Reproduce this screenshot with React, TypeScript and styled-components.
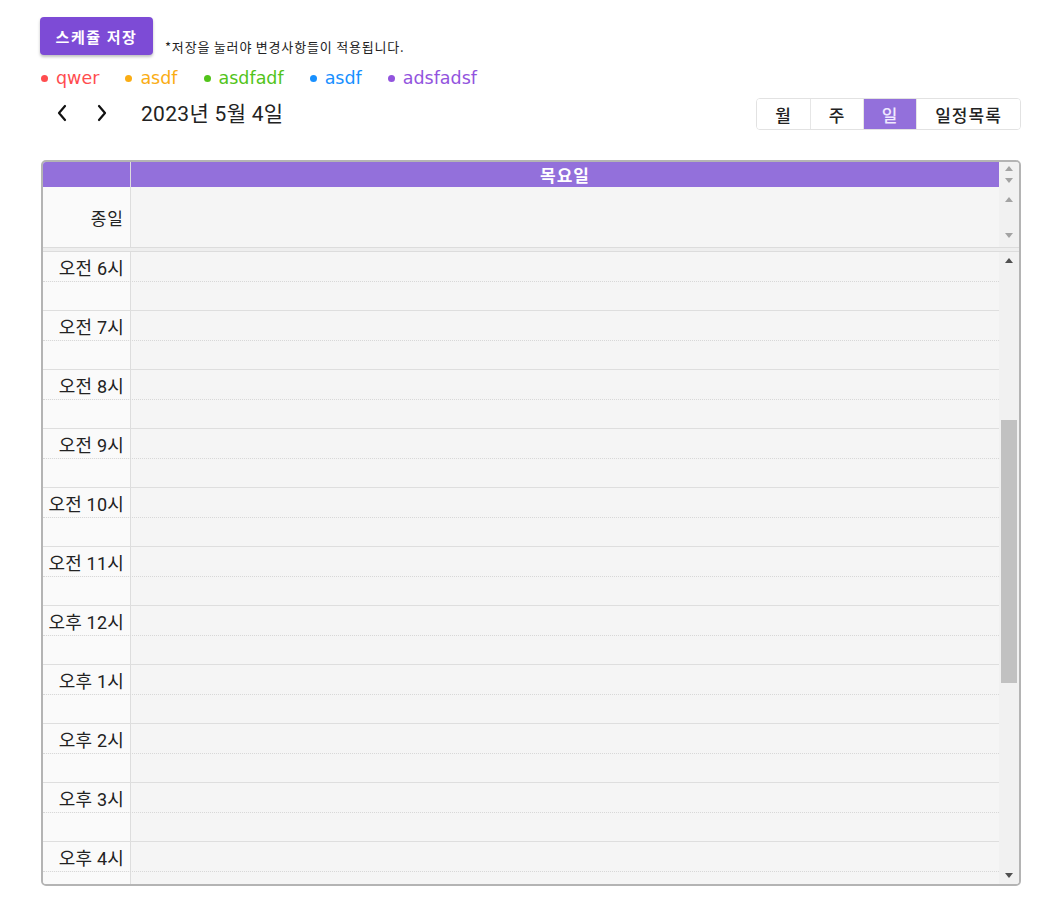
import React from "react";
import styled, { createGlobalStyle } from "styled-components";

const Global = createGlobalStyle`
  html, body { margin: 0; padding: 0; background: #fff; }
  body { font-family: "Noto Sans CJK KR", "Noto Sans", sans-serif; color: #222; }
  * { box-sizing: border-box; }
`;

const mixed = `"Roboto", "Noto Sans CJK KR", sans-serif`;

const Page = styled.div`
  width: 1057px;
  padding: 17px 36px 0 40px;
`;

const TopBar = styled.div`
  display: flex;
  align-items: flex-end;
  gap: 12px;
`;

const SaveButton = styled.button`
  width: 113px;
  height: 38px;
  border: none;
  border-radius: 4px;
  background: #7d4bd6;
  color: #fff;
  font-family: inherit;
  font-size: 15px;
  font-weight: 700;
  letter-spacing: 1.6px;
  padding: 0;
  box-shadow: 0 2px 3px rgba(0, 0, 0, 0.25);
`;

const Note = styled.span`
  font-size: 13px;
  letter-spacing: 0.8px;
  color: #222;
  line-height: 14px;
  margin-bottom: 1px;
`;

const Legend = styled.div`
  display: flex;
  align-items: center;
  gap: 26px;
  height: 22px;
  margin-top: 12px;
  margin-left: 1px;
`;

const LegendItem = styled.div<{ $c: string }>`
  display: flex;
  align-items: center;
  gap: 8px;
  color: ${(p) => p.$c};
  font-family: "DejaVu Sans", sans-serif;
  font-size: 17.5px;
  &::before {
    content: "";
    width: 7px;
    height: 7px;
    border-radius: 50%;
    background: ${(p) => p.$c};
  }
`;

const NavRow = styled.div`
  display: flex;
  align-items: center;
  justify-content: space-between;
  margin-top: 9px;
  height: 32px;
`;

const NavLeft = styled.div`
  display: flex;
  align-items: center;
  padding-left: 2px;
`;

const ArrowBtn = styled.button`
  width: 40px;
  height: 32px;
  border: none;
  background: transparent;
  display: flex;
  align-items: center;
  justify-content: center;
  padding: 0;
  margin-top: -2px;
`;

const Title = styled.h2`
  margin: -4px 0 0 19px;
  font-family: ${mixed};
  font-size: 21px;
  font-weight: 400;
  letter-spacing: 0.3px;
  color: #222;
`;

const ViewGroup = styled.div`
  display: flex;
  border: 1px solid #e2e2e2;
  border-radius: 4px;
  overflow: hidden;
  height: 32px;
`;

const ViewBtn = styled.button<{ $w: number; $active?: boolean }>`
  width: ${(p) => p.$w}px;
  border: none;
  border-left: 1px solid #e6e6e6;
  &:first-child { border-left: none; }
  background: ${(p) => (p.$active ? "#9370db" : "#fff")};
  color: ${(p) => (p.$active ? "#f0eaff" : "#222")};
  font-family: inherit;
  font-size: 17px;
  letter-spacing: 1px;
  font-weight: 500;
  padding: 0;
`;

const Calendar = styled.div`
  margin-top: 30px;
  margin-left: 1px;
  width: 980px;
  height: 726px;
  border: 2px solid #b4b4b4;
  border-radius: 5px;
  display: flex;
  flex-direction: column;
  overflow: hidden;
  background: #f5f5f5;
`;

const Row = styled.div<{ $h?: number }>`
  display: flex;
  ${(p) => (p.$h ? `height: ${p.$h}px;` : "")}
  flex-shrink: 0;
`;

const HeaderGutter = styled.div`
  width: 88px;
  background: #9370db;
  border-right: 1px solid #ddd;
`;

const HeaderDay = styled.div`
  flex: 1;
  background: #9370db;
  color: #fff;
  font-size: 17px;
  letter-spacing: 1px;
  font-weight: 700;
  display: flex;
  align-items: center;
  justify-content: center;
`;

const ScrollCol = styled.div<{ $spread?: boolean }>`
  width: 20px;
  background: #f1f1f1;
  display: flex;
  flex-direction: column;
  align-items: center;
  justify-content: ${(p) => (p.$spread ? "space-between" : "flex-start")};
`;

const Tri = styled.div<{ $down?: boolean; $dark?: boolean }>`
  width: 0;
  height: 0;
  border-left: 4px solid transparent;
  border-right: 4px solid transparent;
  ${(p) =>
    p.$down
      ? `border-top: 5px solid ${p.$dark ? "#505050" : "#a3a3a3"};`
      : `border-bottom: 5px solid ${p.$dark ? "#505050" : "#a3a3a3"};`}
`;

const TriBox = styled.div<{ $h: number }>`
  height: ${(p) => p.$h}px;
  width: 100%;
  display: flex;
  align-items: center;
  justify-content: center;
  flex-shrink: 0;
`;

const AllDayLabel = styled.div`
  width: 88px;
  background: #fafafa;
  border-right: 1px solid #ddd;
  display: flex;
  align-items: center;
  justify-content: flex-end;
  padding-right: 6px;
  font-size: 17px;
  letter-spacing: 1px;
  font-weight: 400;
`;

const AllDayCell = styled.div`
  flex: 1;
  background: #f5f5f5;
`;

const Divider = styled.div`
  height: 5px;
  flex-shrink: 0;
  border-top: 1px solid #dcdcdc;
  border-bottom: 1px solid #dcdcdc;
  background: #eeeeee;
`;

const Body = styled.div`
  flex: 1;
  display: flex;
  min-height: 0;
`;

const Grid = styled.div`
  flex: 1;
  overflow: hidden;
`;

const Slot = styled.div<{ $h: number; $dotted?: boolean }>`
  display: flex;
  height: ${(p) => p.$h}px;
  border-bottom: 1px ${(p) => (p.$dotted ? "dotted #d8d8d8" : "solid #dedede")};
`;

const TimeLabel = styled.div`
  width: 88px;
  background: #fafafa;
  border-right: 1px solid #ddd;
  display: flex;
  align-items: center;
  justify-content: flex-end;
  padding-right: 6px;
  font-family: ${mixed};
  font-size: 18px;
  font-weight: 400;
  letter-spacing: 0.2px;
  white-space: nowrap;
`;

const TimeCell = styled.div`
  flex: 1;
  background: #f5f5f5;
`;

const Thumb = styled.div`
  width: 16px;
  height: 263px;
  margin-top: 151px;
  background: #c1c1c1;
`;

const Spacer = styled.div`
  flex: 1;
`;

const Chevron = ({ dir }: { dir: "l" | "r" }) => (
  <svg width="12" height="18" viewBox="0 0 12 18">
    <polyline
      points={dir === "l" ? "9,2 3,9 9,16" : "3,2 9,9 3,16"}
      fill="none"
      stroke="#111"
      strokeWidth="2.2"
      strokeLinecap="round"
      strokeLinejoin="round"
    />
  </svg>
);

const legend = [
  { c: "#ff4d4f", t: "qwer" },
  { c: "#faad14", t: "asdf" },
  { c: "#52c41a", t: "asdfadf" },
  { c: "#1890ff", t: "asdf" },
  { c: "#9254de", t: "adsfadsf" },
];

const hours = Array.from({ length: 11 }, (_, i) => i + 6);
const label = (h: number) =>
  h < 12 ? `오전 ${h}시` : `오후 ${h === 12 ? 12 : h - 12}시`;

export default function App() {
  return (
    <>
      <Global />
      <Page>
        <TopBar>
          <SaveButton>스케쥴 저장</SaveButton>
          <Note>*저장을 눌러야 변경사항들이 적용됩니다.</Note>
        </TopBar>
        <Legend>
          {legend.map((l, i) => (
            <LegendItem key={i} $c={l.c}>
              {l.t}
            </LegendItem>
          ))}
        </Legend>
        <NavRow>
          <NavLeft>
            <ArrowBtn>
              <Chevron dir="l" />
            </ArrowBtn>
            <ArrowBtn>
              <Chevron dir="r" />
            </ArrowBtn>
            <Title>2023년 5월 4일</Title>
          </NavLeft>
          <ViewGroup>
            <ViewBtn $w={53}>월</ViewBtn>
            <ViewBtn $w={53}>주</ViewBtn>
            <ViewBtn $w={53} $active>
              일
            </ViewBtn>
            <ViewBtn $w={104}>일정목록</ViewBtn>
          </ViewGroup>
        </NavRow>
        <Calendar>
          <Row $h={25}>
            <HeaderGutter />
            <HeaderDay>목요일</HeaderDay>
            <ScrollCol>
              <TriBox $h={12}>
                <Tri />
              </TriBox>
              <TriBox $h={12}>
                <Tri $down />
              </TriBox>
            </ScrollCol>
          </Row>
          <Row $h={60}>
            <AllDayLabel>종일</AllDayLabel>
            <AllDayCell />
            <ScrollCol $spread>
              <TriBox $h={24}>
                <Tri />
              </TriBox>
              <TriBox $h={24}>
                <Tri $down />
              </TriBox>
            </ScrollCol>
          </Row>
          <Divider />
          <Body>
            <Grid>
              {hours.map((h) => (
                <div key={h}>
                  <Slot $h={30} $dotted>
                    <TimeLabel>{label(h)}</TimeLabel>
                    <TimeCell />
                  </Slot>
                  <Slot $h={29}>
                    <TimeLabel />
                    <TimeCell />
                  </Slot>
                </div>
              ))}
            </Grid>
            <ScrollCol>
              <TriBox $h={17}>
                <Tri $dark />
              </TriBox>
              <Thumb />
              <Spacer />
              <TriBox $h={17}>
                <Tri $dark $down />
              </TriBox>
            </ScrollCol>
          </Body>
        </Calendar>
      </Page>
    </>
  );
}
